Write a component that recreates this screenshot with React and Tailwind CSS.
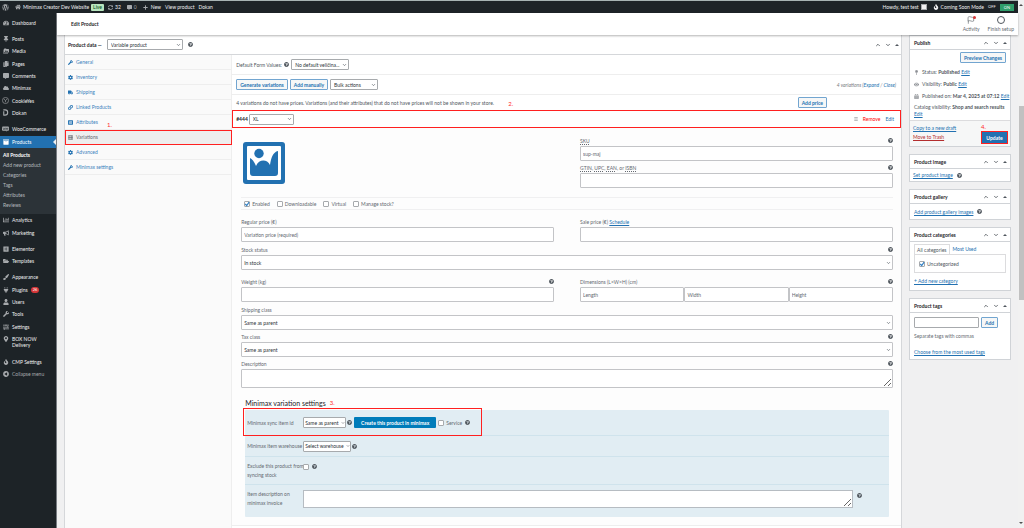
import React, { useState } from 'react';
import {
    FaWordpress, FaHome, FaSyncAlt, FaCommentAlt, FaPlus, FaTachometerAlt, FaThumbtack, FaCopy, FaCloud,
    FaArchive, FaChartBar, FaBullhorn, FaElementor, FaFolderOpen, FaPaintBrush, FaPlug, FaUser, FaWrench,
    FaSlidersH, FaMapMarkerAlt, FaPlayCircle, FaQuestionCircle, FaCog, FaTruck, FaLink, FaListAlt,
    FaEye, FaCalendarAlt, FaMapPin, FaFire, FaBars
} from 'react-icons/fa';
import { MdPermMedia } from 'react-icons/md';
import { FiChevronDown, FiChevronUp, FiFlag } from 'react-icons/fi';

const WooIcon = () => (
    <svg viewBox="0 0 20 16" className="w-[7px] h-[6px]">
        <rect x="0" y="1" width="20" height="12" rx="3" fill="currentColor" />
        <path d="M10 12l4 4-1-4z" fill="currentColor" />
        <path d="M3 4l1.5 6 2-4 1.5 4 1-6M11 5.5h2v3.5h-2zM15 5.5h2v3.5h-2z" fill="none" stroke="#1d2327" strokeWidth="1.2" />
    </svg>
);

const CookieIcon = () => (
    <svg viewBox="0 0 16 16" className="w-[7px] h-[7px]" fill="none" stroke="currentColor" strokeWidth="1.4">
        <circle cx="8" cy="8" r="7" />
        <path d="M4.5 4.5L8 8.5l3.5-4M8 8.5V12" />
    </svg>
);

const DokanIcon = () => (
    <svg viewBox="0 0 16 16" className="w-[7px] h-[7px]" fill="none" stroke="currentColor" strokeWidth="2.5">
        <path d="M3 2h4c8 0 8 12 0 12H3M4 5v9" />
    </svg>
);

const GridIcon = () => (
    <svg viewBox="0 0 16 16" className="w-[5px] h-[5px]" fill="none" stroke="currentColor" strokeWidth="2">
        <path d="M1 2h14v12H1zM1 8h14M6 2v12M11 2v12" />
    </svg>
);

const ImageIcon = () => (
    <svg viewBox="0 0 42 42" className="w-[42px] h-[42px]">
        <rect x="0" y="0" width="42" height="42" rx="3" fill="#2271b1" />
        <rect x="4" y="4" width="34" height="34" rx="1" fill="#fff" />
        <circle cx="16" cy="11.5" r="4.7" fill="#2271b1" />
        <path d="M7 16q3 1 6 8c3-7 11-7 14-1 1-7 3-13 8-14v22q0 3-3 3H10q-3 0-3-3z" fill="#2271b1" />
    </svg>
);

const Help = () => <FaQuestionCircle className="size-[5px] text-[#50575e] shrink-0" />;

const menuGroups = [
    { height: 'h-3', items: [{ label: 'Dashboard', icon: FaTachometerAlt }] },
    {
        height: 'h-[86px]',
        items: [
            { label: 'Posts', icon: FaThumbtack },
            { label: 'Media', icon: MdPermMedia },
            { label: 'Pages', icon: FaCopy },
            { label: 'Comments', icon: FaCommentAlt },
            { label: 'Minimax', icon: FaCloud },
            { label: 'CookieYes', icon: CookieIcon },
            { label: 'Dokan', icon: DokanIcon }
        ]
    },
    {
        height: 'h-[25px]',
        items: [
            { label: 'WooCommerce', icon: WooIcon },
            { label: 'Products', icon: FaArchive, active: true }
        ],
        submenu: ['All Products', 'Add new product', 'Categories', 'Tags', 'Attributes', 'Reviews']
    },
    {
        height: 'h-[25px]',
        items: [
            { label: 'Analytics', icon: FaChartBar },
            { label: 'Marketing', icon: FaBullhorn }
        ]
    },
    {
        height: 'h-6',
        items: [
            { label: 'Elementor', icon: FaElementor },
            { label: 'Templates', icon: FaFolderOpen }
        ]
    },
    {
        height: 'h-[62px]',
        items: [
            { label: 'Appearance', icon: FaPaintBrush },
            { label: 'Plugins', icon: FaPlug, badge: '26' },
            { label: 'Users', icon: FaUser },
            { label: 'Tools', icon: FaWrench },
            { label: 'Settings', icon: FaSlidersH }
        ]
    }
];

const productTabs = [
    { label: 'General', icon: FaWrench },
    { label: 'Inventory', icon: FaCog },
    { label: 'Shipping', icon: FaTruck },
    { label: 'Linked Products', icon: FaLink },
    { label: 'Attributes', icon: FaListAlt },
    { label: 'Variations', icon: GridIcon },
    { label: 'Advanced', icon: FaCog },
    { label: 'Minimax settings', icon: FaWrench }
];

const MenuItem = ({ label, icon: Icon, active, badge }) => (
    <a href="#" className={`relative flex items-center gap-[3px] pl-[2px] ${active ? 'bg-[#2271b1] text-white' : 'text-[#f0f0f1]'}`}>
        <span className={`w-[7px] flex justify-center ${active ? 'text-white' : 'text-[#a7aaad]'}`}><Icon className="size-[6px]" /></span>
        <span>{label}</span>
        {badge && <span className="bg-[#d63638] text-white rounded-full px-[2px] h-[6px] leading-[6px] text-[4px]">{badge}</span>}
        {active && <span className="absolute right-0 top-1/2 -translate-y-1/2 border-y-[3px] border-y-transparent border-r-[3px] border-r-[#f0f0f1]"></span>}
    </a>
);

const AdminMenu = () => (
    <nav className="w-[57px] shrink-0 bg-[#1d2327] border-r border-[#787c82] pt-1 flex flex-col gap-1">
        {menuGroups.map(group => (
            <div key={group.items[0].label}>
                <div className={`grid auto-rows-fr ${group.height}`}>
                    {group.items.map(item => <MenuItem key={item.label} {...item} />)}
                </div>
                {group.submenu && (
                    <ul className="bg-[#2c3338] pt-[2px] pb-1 pl-[3px] -mb-1 text-[#b4b9be]">
                        {group.submenu.map((label, i) => (
                            <li key={label} className="h-[10px] flex items-center">
                                <a href="#" className={i === 0 ? 'text-white font-bold' : ''}>{label}</a>
                            </li>
                        ))}
                    </ul>
                )}
            </div>
        ))}
        <div className="-mt-1 text-[#f0f0f1]">
            <a href="#" className="flex gap-[3px] pl-[2px] pt-[3px] h-[19px]">
                <span className="w-[7px] flex justify-center text-[#a7aaad]"><FaMapMarkerAlt className="size-[6px]" /></span>
                <span>BOX NOW<br />Delivery</span>
            </a>
        </div>
        <div className="text-[#f0f0f1] grid auto-rows-fr h-6">
            <MenuItem label="CMP Settings" icon={FaFire} />
            <button type="button" className="flex items-center gap-[3px] pl-[2px] text-[#a7aaad]">
                <span className="w-[7px] flex justify-center"><FaPlayCircle className="size-[6px] rotate-180" /></span>
                <span>Collapse menu</span>
            </button>
        </div>
    </nav>
);

const AdminBar = () => (
    <header className="h-[13px] shrink-0 bg-[#1d2327] border-t border-[#a7b3b3] text-[#f0f0f1] flex items-center justify-between pl-[2px]">
        <div className="flex items-center">
            <FaWordpress className="size-[7px] text-[#a7aaad]" />
            <a href="#" className="flex items-center gap-[2px] ml-[6px]"><FaHome className="size-[6px] text-[#a7aaad]" />Minimax Creator Dev Website</a>
            <span className="bg-[#b8e6bf] text-[#00450c] ml-[2px] px-[2px] rounded-[1px] leading-[7px]">Live</span>
            <a href="#" className="flex items-center gap-[2px] ml-1"><FaSyncAlt className="size-[5px] text-[#a7aaad]" />32</a>
            <a href="#" className="flex items-center gap-[2px] ml-[6px] text-[#a7aaad]"><FaCommentAlt className="size-[5px]" />0</a>
            <a href="#" className="flex items-center gap-[3px] ml-[6px]"><FaPlus className="size-[5px] text-[#a7aaad]" />New</a>
            <a href="#" className="ml-1">View product</a>
            <a href="#" className="ml-1">Dokan</a>
        </div>
        <div className="flex items-center">
            <a href="#" className="flex items-center gap-[2px]">Howdy, test test <span className="size-[6px] bg-[#f0f0f1] border border-[#a7aaad]"></span></a>
            <a href="#" className="flex items-center gap-[2px] ml-[6px]"><FaFire className="size-[6px]" />Coming Soon Mode</a>
            <button type="button" className="ml-1 text-[4px]">OFF</button>
            <button type="button" className="ml-1 mr-1 px-1 h-[7px] leading-[7px] text-[4px] bg-[#2f9e6b] text-white">ON</button>
        </div>
    </header>
);

const Handles = () => (
    <div className="flex items-center gap-1 text-[#3c434a]">
        <button type="button" aria-label="Move up"><FiChevronUp className="size-[6px]" strokeWidth="3" /></button>
        <button type="button" aria-label="Move down"><FiChevronDown className="size-[6px]" strokeWidth="3" /></button>
        <button type="button" aria-label="Toggle panel" className="border-x-2 border-x-transparent border-b-2 border-b-[#50575e]"></button>
    </div>
);

const SideCard = ({ title, children }) => (
    <section className="bg-white border border-[#d0d3d7]">
        <div className="h-[14px] border-b border-[#d0d3d7] flex items-center justify-between pl-1 pr-[3px]">
            <h2 className="font-bold text-[#1d2327]">{title}</h2>
            <Handles />
        </div>
        {children}
    </section>
);

const Select = ({ id, className, wrap = '', label, value, tight }) => (
    <span className={`relative flex ${wrap}`}>
        <select id={id} aria-label={label} className={`appearance-none w-full bg-white border border-[#a7aaad] rounded-[1px] text-[#2c3338] ${className}`}>
            <option>{value}</option>
        </select>
        <FiChevronDown
            className={`absolute top-1/2 -translate-y-1/2 text-[#50575e] pointer-events-none ${tight ? 'right-px size-1' : 'right-[2px] size-[5px]'}`}
            strokeWidth="3"
        />
    </span>
);

const Check = ({ label, checked = false, hidden = false }) => {
    const [on, setOn] = useState(checked);
    return (
        <label className="flex items-center gap-[2px]">
            <span className="relative flex">
                <input
                    type="checkbox"
                    aria-label={label}
                    checked={on}
                    onChange={() => setOn(!on)}
                    className="appearance-none size-[6px] border border-[#a7aaad] rounded-[1px] bg-white"
                />
                {on && (
                    <svg viewBox="0 0 10 10" className="absolute inset-0 size-[6px] pointer-events-none">
                        <path d="M2 5l2.5 2.5L8.5 2" fill="none" stroke="#3582c4" strokeWidth="2" />
                    </svg>
                )}
            </span>
            {!hidden && <span>{label}</span>}
        </label>
    );
};

const Field = ({ id, label, help, children }) => (
    <div>
        <div className="h-2 flex items-start justify-between">
            <label htmlFor={id}>{label}</label>
            {help && <Help />}
        </div>
        {children}
    </div>
);

const inputClass = 'block w-full h-[15px] px-[2px] bg-white border border-[#c3c4c7] rounded-[1px] text-[#2c3338] placeholder:text-[#646970]';
const bigSelectClass = 'h-[15px] px-[2px] border-[#c3c4c7]';
const buttonClass = 'h-[11px] px-[3px] border border-[#72a5d0] rounded-[1px] bg-[#f6f7f7] text-[#2271b1] font-bold';
const linkClass = 'text-[#2271b1] underline';

const Mark = ({ className, children }) => (
    <span className={`absolute text-[6px] leading-[6px] text-[#ff2d2d] ${className}`}>{children}</span>
);

const Tabs = () => {
    const [active, setActive] = useState('Variations');
    return (
        <ul className="w-1/5 shrink-0 bg-[#fafafa] border-r border-[#eeeeee]">
            {productTabs.map(({ label, icon: Icon }) => (
                <li key={label} className="relative">
                    <button
                        type="button"
                        onClick={() => setActive(label)}
                        className={`w-full h-[15px] pl-[3px] flex items-center gap-[3px] border-b border-[#eeeeee] ${active === label ? 'bg-[#eeeeee] text-[#646970]' : 'text-[#3b82bd]'}`}
                    >
                        <Icon className={`size-[5px] ${active === label ? '' : 'text-[#2271b1]'}`} />{label}
                    </button>
                    {label === 'Variations' && (
                        <>
                            <span className="absolute inset-y-0 left-0 -right-px border border-[#ff2020] pointer-events-none"></span>
                            <Mark className="left-[42px] -top-2">1.</Mark>
                        </>
                    )}
                </li>
            ))}
        </ul>
    );
};

const MinimaxSettings = () => (
    <div className="px-1 mt-[11px]">
        <h3 className="relative w-fit text-[7px] leading-2 text-[#1d2327] mb-[3px]">
            Minimax variation settings
            <Mark className="left-full top-px ml-1">3.</Mark>
        </h3>
        <div className="relative bg-[#e1edf3] divide-y divide-[#cfe3ec] rounded-[1px] text-[#646970]">
            <span className="absolute -left-[2px] -top-[2px] w-[239px] h-7 border border-[#ff2020] pointer-events-none"></span>
            <div className="h-[26px] pl-[2px] flex items-center">
                <label htmlFor="sync-item" className="w-14 shrink-0">Minimax sync item id</label>
                <Select id="sync-item" value="Same as parent" tight wrap="w-[43px]" className="h-[11px] pl-px" />
                <span className="ml-px"><Help /></span>
                <button type="button" className="ml-[2px] h-[11px] w-[82px] rounded-[1px] bg-[#007cba] text-white font-bold">Create this product in minimax</button>
                <span className="ml-[2px] mr-[3px]"><Check label="Service" /></span>
                <Help />
            </div>
            <div className="h-[21px] pl-[2px] flex items-center">
                <label htmlFor="warehouse" className="w-14 shrink-0 whitespace-nowrap">Minimax item warehouse</label>
                <Select id="warehouse" value="Select warehouse" tight wrap="w-12" className="h-[11px] pl-px" />
                <span className="ml-px"><Help /></span>
            </div>
            <div className="h-7 pl-[2px] pt-[5px] flex items-start">
                <span className="w-14 shrink-0 leading-[9px] whitespace-nowrap">Exclude this product from<br />syncing stock</span>
                <span className="mt-[2px]"><Check label="Exclude this product from syncing stock" hidden /></span>
                <span className="ml-[3px] mt-[2px]"><Help /></span>
            </div>
            <div className="h-8 pl-[2px] pt-[5px] flex items-start">
                <label htmlFor="item-desc" className="w-14 shrink-0 leading-[9px]">Item description on<br />minimax invoice</label>
                <textarea id="item-desc" className="flex-1 h-[18px] bg-white border border-[#b6bcc2]"></textarea>
                <span className="ml-1 mr-[27px] mt-[3px]"><Help /></span>
            </div>
        </div>
    </div>
);

const VariationDetails = () => (
    <div className="bg-[#fdfdfd] pl-[9px] pr-2 pt-[10px] pb-2 text-[#646970] border-b border-[#eeeeee]">
        <div className="grid grid-cols-2 gap-x-[26px]">
            <div className="pl-[2px] pt-1">
                <button type="button" aria-label="Upload an image" className="block"><ImageIcon /></button>
            </div>
            <div className="flex flex-col gap-y-1">
                <Field id="sku" label={<abbr title="Stock Keeping Unit">SKU</abbr>} help>
                    <input id="sku" placeholder="sup-maj" className={inputClass} />
                </Field>
                <Field
                    id="gtin"
                    label={(
                        <>
                            <abbr title="Global Trade Item Number">GTIN</abbr>, <abbr title="Universal Product Code">UPC</abbr>,{' '}
                            <abbr title="European Article Number">EAN</abbr>, or <abbr title="International Standard Book Number">ISBN</abbr>
                        </>
                    )}
                    help
                >
                    <input id="gtin" className={inputClass} />
                </Field>
            </div>
        </div>
        <div className="mt-[9px] h-[13px] border-y border-[#f0f0f1] pl-[3px] flex items-center gap-[7px]">
            <Check label="Enabled" checked />
            <Check label="Downloadable" />
            <Check label="Virtual" />
            <Check label="Manage stock?" />
        </div>
        <div className="mt-[9px] grid grid-cols-2 gap-x-[26px]">
            <Field id="price" label="Regular price (€)">
                <input id="price" placeholder="Variation price (required)" className={inputClass} />
            </Field>
            <Field id="sale" label={<>Sale price (€) <a href="#" className={linkClass}>Schedule</a></>}>
                <input id="sale" className={inputClass} />
            </Field>
        </div>
        <div className="mt-[5px]">
            <Field id="stock" label="Stock status" help>
                <Select id="stock" value="In stock" className={bigSelectClass} />
            </Field>
        </div>
        <div className="mt-[9px] grid grid-cols-2 gap-x-[26px]">
            <Field id="weight" label="Weight (kg)" help>
                <input id="weight" className={inputClass} />
            </Field>
            <Field id="length" label="Dimensions (L×W×H) (cm)" help>
                <div className="grid grid-cols-3">
                    <input id="length" placeholder="Length" className={inputClass} />
                    <input aria-label="Width" placeholder="Width" className={inputClass} />
                    <input aria-label="Height" placeholder="Height" className={inputClass} />
                </div>
            </Field>
        </div>
        <div className="mt-[5px] flex flex-col gap-y-1">
            <Field id="shipping" label="Shipping class">
                <Select id="shipping" value="Same as parent" className={bigSelectClass} />
            </Field>
            <Field id="tax" label="Tax class" help>
                <Select id="tax" value="Same as parent" className={bigSelectClass} />
            </Field>
            <Field id="desc" label="Description" help>
                <textarea id="desc" className="block w-full h-[19px] bg-white border border-[#c3c4c7] rounded-[1px]"></textarea>
            </Field>
        </div>
        <MinimaxSettings />
    </div>
);

const ProductData = () => (
    <section className="flex-1 min-w-0 bg-white border-x border-[#d5d7da] flex flex-col">
        <div className="h-5 shrink-0 border-b border-[#d5d7da] flex items-center justify-between pl-[3px] pr-[2px]">
            <div className="flex items-center">
                <h2 className="font-bold text-[#1d2327] mr-[5px]">Product data —</h2>
                <Select label="Product type" value="Variable product" wrap="w-[76px]" className="h-[11px] pl-[3px] pr-2" />
                <span className="ml-[5px]"><Help /></span>
            </div>
            <Handles />
        </div>
        <div className="flex flex-1">
            <Tabs />
            <div className="flex-1 min-w-0 text-[#50575e]">
                <div className="h-5 pl-1 flex items-center border-b border-[#eeeeee]">
                    <span className="w-12">Default Form Values:</span>
                    <Help />
                    <Select label="Default value" value="No default veličina..." wrap="w-[58px] ml-[2px]" className="h-[11px] pl-[3px] pr-[6px]" />
                </div>
                <div className="h-5 pl-1 pr-[5px] flex items-center justify-between border-b border-[#eeeeee]">
                    <div className="flex items-center gap-[2px]">
                        <button type="button" className={buttonClass}>Generate variations</button>
                        <button type="button" className={buttonClass}>Add manually</button>
                        <Select label="Bulk actions" value="Bulk actions" wrap="w-12" className="h-[11px] pl-[3px] pr-2" />
                    </div>
                    <span className="italic text-[#787c82]">4 variations (<a href="#" className="text-[#2271b1]">Expand</a> / <a href="#" className="text-[#2271b1]">Close</a>)</span>
                </div>
                <div className="relative h-[15px] pl-1 pr-[74px] flex items-center justify-between">
                    <p>4 variations do not have prices. Variations (and their attributes) that do not have prices will not be shown in your store.</p>
                    <button type="button" className={buttonClass}>Add price</button>
                    <Mark className="left-[276px] top-[6px]">2.</Mark>
                </div>
                <div className="h-[18px] pl-[3px] pr-[6px] border border-[#ff2020] flex items-center justify-between">
                    <div className="flex items-center gap-px">
                        <strong className="text-[#1d2327]">#444</strong>
                        <Select label="Size" value="XL" wrap="w-[45px]" className="h-[11px] pl-[3px] pr-2" />
                    </div>
                    <div className="flex items-center gap-[5px]">
                        <FaBars className="size-[4px] text-[#787c82]" />
                        <a href="#" className="text-[#ff0000]">Remove</a>
                        <a href="#" className="text-[#2271b1]">Edit</a>
                    </div>
                </div>
                <VariationDetails />
            </div>
        </div>
    </section>
);

const Sidebar = () => (
    <aside className="w-[102px] shrink-0 flex flex-col gap-[7px] text-[#50575e]">
        <SideCard title="Publish">
            <div className="px-1 pt-[2px]">
                <div className="flex justify-end"><button type="button" className={buttonClass}>Preview Changes</button></div>
                <p className="mt-[6px] flex items-center gap-[3px]"><FaMapPin className="size-[5px] text-[#8c8f94]" /><span>Status: <b>Published</b> <a href="#" className={linkClass}>Edit</a></span></p>
                <p className="mt-[6px] flex items-center gap-[3px]"><FaEye className="size-[5px] text-[#8c8f94]" /><span>Visibility: <b>Public</b> <a href="#" className={linkClass}>Edit</a></span></p>
                <p className="mt-[6px] flex items-center gap-[3px] whitespace-nowrap"><FaCalendarAlt className="size-[5px] shrink-0 text-[#8c8f94]" /><span>Published on: <b>Mar 4, 2025 at 07:12</b> <a href="#" className={linkClass}>Edit</a></span></p>
                <p className="mt-[5px] leading-[7px]">Catalog visibility: <b>Shop and search results</b><br /><a href="#" className={linkClass}>Edit</a></p>
            </div>
            <div className="relative mt-[2px] h-[26px] pl-[3px] pr-[2px] pt-[2px] bg-[#f6f7f7] border-t border-[#dcdcde] flex justify-between">
                <div className="flex flex-col gap-[3px] pt-[2px]">
                    <a href="#" className={linkClass}>Copy to a new draft</a>
                    <a href="#" className="text-[#b32d2e] underline">Move to Trash</a>
                </div>
                <Mark className="left-[71px] top-[3px]">4.</Mark>
                <button type="button" className="mt-2 h-[13px] w-[27px] bg-[#2271b1] border border-[#ff2020] text-white font-bold">Update</button>
            </div>
        </SideCard>
        <SideCard title="Product image">
            <div className="h-3 pl-[3px] flex items-center gap-1"><a href="#" className={linkClass}>Set product image</a><Help /></div>
        </SideCard>
        <SideCard title="Product gallery">
            <div className="h-[15px] pl-1 flex items-center gap-1"><a href="#" className={linkClass}>Add product gallery images</a><Help /></div>
        </SideCard>
        <SideCard title="Product categories">
            <div className="px-1 pt-[2px] pb-[6px]">
                <div className="flex">
                    <button type="button" className="h-[10px] px-[2px] border border-b-0 border-[#dcdcde] bg-white -mb-px relative">All categories</button>
                    <button type="button" className="h-[10px] px-[3px] text-[#2271b1]">Most Used</button>
                </div>
                <div className="h-[19px] border border-[#dcdcde] pl-1 flex items-center gap-[2px]"><Check label="Uncategorized" checked /></div>
                <a href="#" className={`block mt-[5px] ${linkClass}`}>+ Add new category</a>
            </div>
        </SideCard>
        <SideCard title="Product tags">
            <div className="px-1 pt-1 pb-1">
                <div className="flex gap-[2px]">
                    <input aria-label="Add new tag" className="w-[65px] h-[11px] border border-[#a7aaad] rounded-[1px]" />
                    <button type="button" className={buttonClass}>Add</button>
                </div>
                <p className="mt-[5px] text-[#646970]">Separate tags with commas</p>
                <a href="#" className={`block mt-[10px] ${linkClass}`}>Choose from the most used tags</a>
            </div>
        </SideCard>
    </aside>
);

const ScrollBar = () => (
    <div className="w-[6px] shrink-0 bg-[#f1f1f1] flex flex-col items-center pt-1 pb-1">
        <span className="border-x-2 border-x-transparent border-b-2 border-b-[#505050]"></span>
        <div className="mt-[100px] h-[194px] w-[5px] bg-[#c1c1c1]"></div>
        <span className="mt-auto border-x-2 border-x-transparent border-t-2 border-t-[#505050]"></span>
    </div>
);

const App = () => (
    <div className="h-screen overflow-hidden flex bg-[#f0f0f1] font-['Lato','Liberation_Sans',sans-serif] text-[5px] leading-[6px]">
        <div className="flex-1 min-w-0 flex flex-col">
            <AdminBar />
            <div className="flex flex-1 min-h-0">
                <AdminMenu />
                <main className="flex-1 min-w-0 flex flex-col">
                    <div className="relative z-10 h-[22px] shrink-0 bg-white pl-[14px] pr-1 flex items-center justify-between shadow-[0_1px_2px_rgba(0,0,0,0.3)]">
                        <h1 className="font-bold text-[#1d2327]">Edit Product</h1>
                        <div className="flex gap-2 text-[#646970]">
                            <button type="button" className="relative flex flex-col items-center gap-[2px]">
                                <FiFlag className="size-2" />Activity
                                <span className="absolute right-1 top-0 size-[3px] rounded-full bg-[#d63638]"></span>
                            </button>
                            <button type="button" className="flex flex-col items-center gap-[2px]">
                                <span className="size-2 rounded-full border border-[#50575e]"></span>Finish setup
                            </button>
                        </div>
                    </div>
                    <div className="flex-1 min-h-0 flex items-start gap-[7px] px-[7px]">
                        <div className="flex-1 min-w-0 self-stretch flex"><ProductData /></div>
                        <Sidebar />
                    </div>
                </main>
            </div>
        </div>
        <ScrollBar />
    </div>
);

export default App;
